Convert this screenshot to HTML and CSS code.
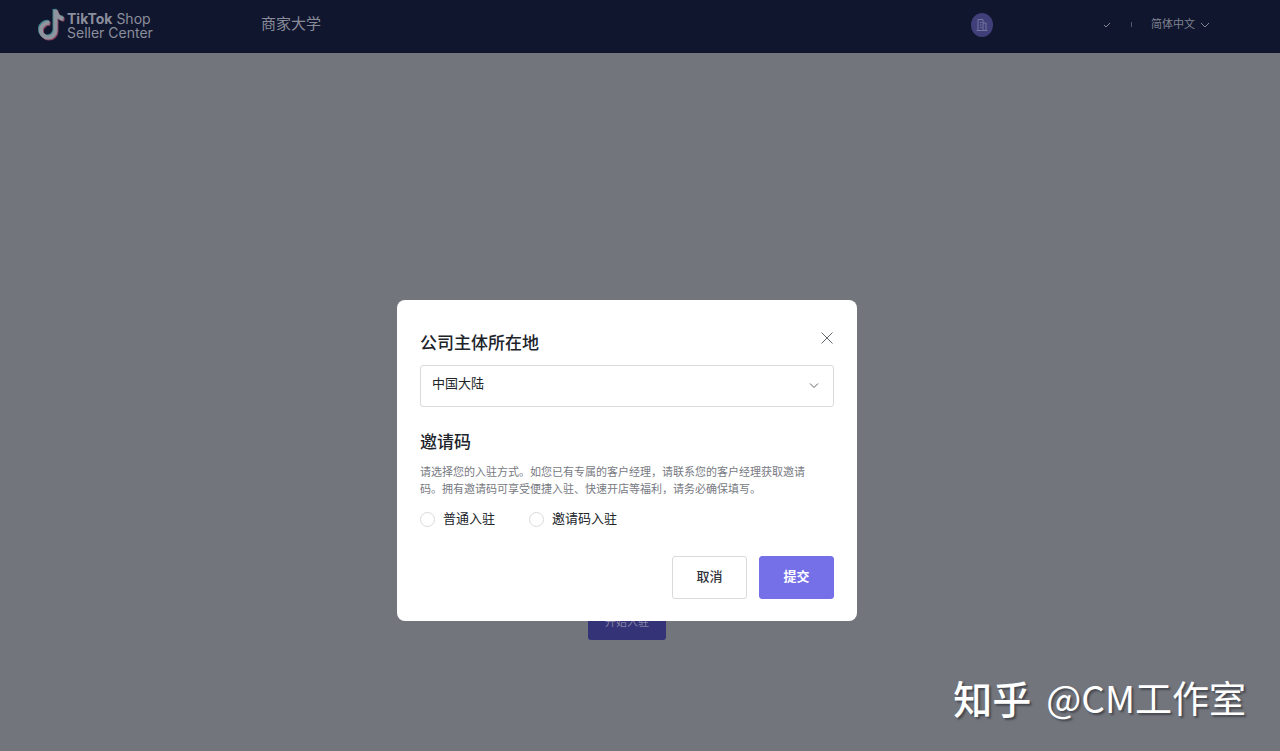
FILE: index.html
```html
<!DOCTYPE html>
<html lang="zh-CN">
<head>
<meta charset="utf-8">
<meta name="viewport" content="width=device-width, initial-scale=1">
<title>TikTok Shop Seller Center</title>
<link rel="stylesheet" href="styles.css">
</head>
<body>
<header class="topbar">
  <a class="logo" href="#">
    <svg class="logo-mark" width="28" height="34" viewBox="0 0 28 34" fill="none" stroke-width="4" aria-hidden="true">
      <defs><path id="note" d="M11.500 15a7.300 7.300 0 1 0 6 7.200V2c.5 4.500 3.500 8 8 8.800"/></defs>
      <use href="#note" stroke="#41808a" x="-1" y="-1"/>
      <use href="#note" stroke="#8a4560" x="1" y="1"/>
      <use href="#note" stroke="#8f959e"/>
    </svg>
    <span class="logo-text"><span><b>TikTok</b> Shop</span><span>Seller Center</span></span>
  </a>
  <a class="nav-link" href="#">商家大学</a>
  <div class="account">
    <span class="avatar">
      <svg width="12" height="12" viewBox="0 0 12 12" fill="none" stroke="#74749f" aria-hidden="true"><path d="M.5 11.500h11M2 11.500v-11h5v11M7 4h3v7.500M4 3.500h1.500M4 6h1.500M4 8.500h1.500"/></svg>
    </span>
    <svg class="check" width="8" height="6" viewBox="0 0 8 6" fill="none" stroke="#848895" aria-hidden="true"><path d="M1 3l2 2 4-4"/></svg>
    <span class="divider"></span>
    <button class="language" type="button">简体中文
      <svg width="10" height="6" viewBox="0 0 10 6" fill="none" stroke="currentColor" aria-hidden="true"><path d="M1 1l4 4 4-4"/></svg>
    </button>
  </div>
</header>
<main class="page">
  <button class="start" type="button">开始入驻</button>
</main>
<div class="overlay">
  <form class="dialog" role="dialog" aria-labelledby="region-title">
    <div class="dialog-head">
      <h2 class="title" id="region-title"><label for="region">公司主体所在地</label></h2>
      <button class="close" type="button" aria-label="关闭">
        <svg width="12" height="12" viewBox="0 0 12 12" fill="none" stroke="#63666d" aria-hidden="true"><path d="M.5.5l11 11M11.500.5l-11 11"/></svg>
      </button>
    </div>
    <div class="select-wrap">
      <select class="select" id="region"><option>中国大陆</option></select>
      <svg class="select-arrow" width="10" height="6" viewBox="0 0 10 6" fill="none" stroke="#5d6067" aria-hidden="true"><path d="M1 .5l4 4 4-4"/></svg>
    </div>
    <h2 class="title">邀请码</h2>
    <p class="hint">请选择您的入驻方式。如您已有专属的客户经理，请联系您的客户经理获取邀请码。拥有邀请码可享受便捷入驻、快速开店等福利，请务必确保填写。</p>
    <div class="options">
      <label class="option"><input class="radio" type="radio" name="mode">普通入驻</label>
      <label class="option"><input class="radio" type="radio" name="mode">邀请码入驻</label>
    </div>
    <div class="actions">
      <button class="button" type="button">取消</button>
      <button class="button primary" type="submit">提交</button>
    </div>
  </form>
</div>
<div class="watermark"><span class="brand">知乎</span><span>@CM工作室</span></div>
</body>
</html>
```
FILE: styles.css
```css
* { box-sizing: border-box; }
body {
  margin: 0;
  min-height: 100vh;
  display: flex;
  flex-direction: column;
  position: relative;
  background: #72757c;
  color: #20232a;
  font-family: "Liberation Sans", "Noto Sans CJK SC", sans-serif;
  font-size: 13px;
}
button, select { font: inherit; color: inherit; cursor: pointer; }
.topbar {
  height: 53px;
  padding: 0 70px 8px 38px;
  display: flex;
  align-items: center;
  background: #11162f;
  color: #898c98;
}
.logo { display: flex; align-items: center; gap: 1px; color: #8b8e9b; text-decoration: none; }
.logo-mark { margin-top: 5px; overflow: visible; }
.logo-text { width: 92px; display: flex; flex-direction: column; margin-top: 7px; font: 14px/14px Inter, sans-serif; white-space: nowrap; }
.logo-text b { font-weight: 700; }
.nav-link { margin-left: 102px; font-size: 15px; color: inherit; text-decoration: none; }
.account { margin-left: auto; display: flex; align-items: center; }
.avatar {
  width: 22px;
  height: 24px;
  margin: 4px 110px 0 0;
  display: grid;
  place-items: center;
  border-radius: 50%;
  background: #413f79;
}
.check { margin: 4px 20px 0 0; }
.divider { width: 1px; height: 5px; margin: 4px 19px 0 0; background: #555968; }
.language { display: flex; align-items: center; gap: 5px; padding: 0; border: 0; background: none; font-size: 11px; color: #7f828f; }
.language svg { margin-top: 4px; }
.page { padding: 549px 26px 0 0; display: flex; justify-content: center; }
.start { width: 78px; height: 38px; border: 0; border-radius: 3px; background: #353377; color: #8584a8; font-size: 11px; }
.overlay { position: absolute; inset: 0; padding: 300px 26px 0 0; display: flex; justify-content: center; align-items: flex-start; }
.dialog { width: 460px; padding: 30px 23px 22px; border-radius: 8px; background: #fff; }
.dialog-head { display: flex; justify-content: space-between; align-items: flex-start; }
.title { margin: 0; font-size: 17px; line-height: 28px; font-weight: 500; }
.close { display: flex; margin: 2px 1px 0 0; padding: 0; border: 0; background: none; }
.select-wrap { position: relative; margin: 7px 0 22px; }
.select {
  width: 100%;
  height: 42px;
  display: block;
  padding: 0 11px 5px;
  appearance: none;
  border: 1px solid #d9dadd;
  border-radius: 3px;
  background: #fff;
}
.select-arrow { position: absolute; right: 15px; top: 18px; pointer-events: none; }
.hint { margin: 7px 16px 12px 0; font-size: 11px; line-height: 17px; color: #777a82; }
.options { display: flex; gap: 34px; }
.option { display: flex; align-items: center; gap: 8px; line-height: 18px; }
.radio { width: 15px; height: 15px; margin: 0; appearance: none; border: 1px solid #d9dadd; border-radius: 50%; }
.actions { display: flex; justify-content: flex-end; gap: 12px; margin-top: 28px; }
.button { width: 75px; height: 43px; padding: 0 0 4px; border: 1px solid #d9dadd; border-radius: 3px; background: #fff; font-weight: 500; color: #30333a; }
.primary { border-color: #756fe8; background: #756fe8; color: #fff; font-weight: 700; }
.watermark {
  position: absolute;
  right: 34px;
  bottom: 27px;
  display: flex;
  gap: 15px;
  color: #fff;
  font: 37px/54px "Noto Sans CJK SC", sans-serif;
  text-shadow: 2px 2px 2px #45484f;
}
.brand { font-size: 39px; font-weight: 500; }
```
